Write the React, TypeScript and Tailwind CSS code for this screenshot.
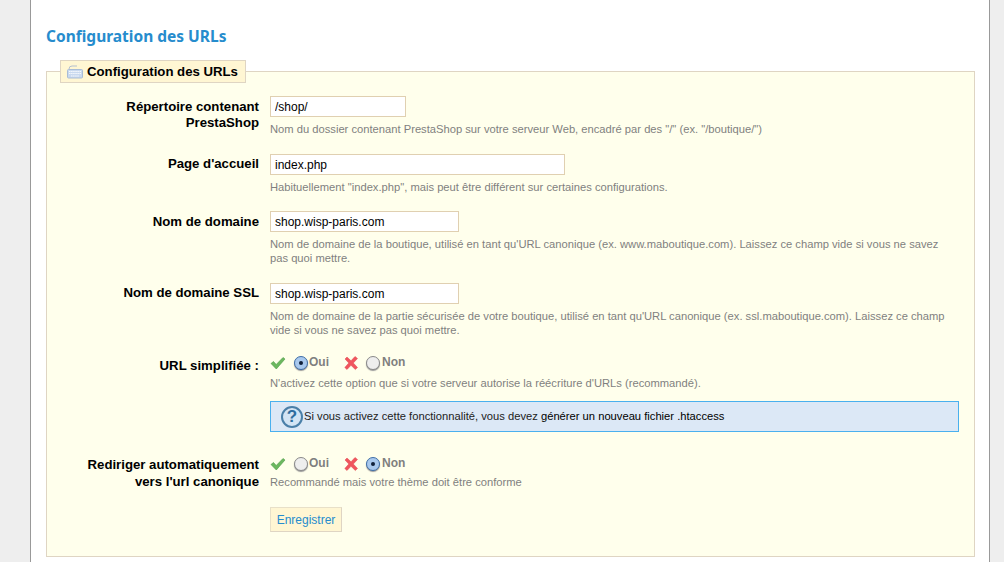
function Check() {
  return (
    <svg width="16" height="16" viewBox="0 0 16 16" className="shrink-0">
      <path d="M1 8.5 L3.5 6.5 L6.2 9.5 L13 2.5 L15 4 L6.3 14 Z" fill="#6cb85f" stroke="#4d9a48" strokeWidth="0.6" />
    </svg>
  )
}

function Cross() {
  return (
    <svg width="16" height="16" viewBox="0 0 16 16" className="shrink-0">
      <path d="M2 4 L4 2 L8 5.8 L12 1.5 L14.5 3.5 L10.3 8 L14.5 12.5 L12.3 14.5 L8 10.3 L4 14.5 L1.8 12.5 L5.8 8 Z" fill="#f0555e" stroke="#e0444c" strokeWidth="0.5" />
    </svg>
  )
}

function Radio({ on }: { on?: boolean }) {
  if (on) {
    return (
      <span className="flex h-[14px] w-[14px] shrink-0 items-center justify-center rounded-full border border-[#3f6fa8] bg-[#a9c9ee] shadow-[0_1px_1px_#999]">
        <span className="h-[4px] w-[4px] rounded-full bg-[#10203a]" />
      </span>
    )
  }
  return <span className="block h-[14px] w-[14px] shrink-0 rounded-full border border-[#8a8a8a] bg-[#eeeeee] shadow-[0_1px_1px_#999]" />
}

function KeyboardIcon() {
  return (
    <svg width="16" height="14" viewBox="0 0 16 14" className="shrink-0">
      <path d="M2 4 Q2 1 5 1 L10 1" fill="none" stroke="#b4bfcf" strokeWidth="1" />
      <rect x="0.5" y="4.5" width="15" height="8.5" rx="1" fill="#c9d9ef" stroke="#a9bcd6" />
      <path d="M2 6.5 H14 M2 8.5 H14 M4 11 H12" stroke="#f5f8fc" strokeWidth="1" strokeDasharray="1.5 0.6" />
    </svg>
  )
}

function Label({ children, className }: { children: React.ReactNode; className?: string }) {
  return <div className={`w-[212px] shrink-0 text-right text-[13.2px] font-bold text-black ${className ?? 'leading-[16px]'}`}>{children}</div>
}

function Hint({ children, className }: { children: React.ReactNode; className?: string }) {
  return <p className={`text-[11.2px] leading-[14px] whitespace-nowrap text-[#7f7f7f] ${className ?? ''}`}>{children}</p>
}

function Field({ label, value, width, hint, className, labelClass }: { label: React.ReactNode; value: string; width: string; hint: React.ReactNode; className: string; labelClass?: string }) {
  return (
    <div className={`flex gap-[11px] ${className}`}>
      <Label className={labelClass}>{label}</Label>
      <div>
        <input readOnly value={value} className={`block h-[21px] border border-[#e0d0b1] bg-white px-[4px] text-[12px] text-black outline-none ${width}`} />
        <Hint className="mt-[5px]">{hint}</Hint>
      </div>
    </div>
  )
}

function Toggle({ on }: { on: boolean }) {
  return (
    <div className="flex h-[16px] items-center text-[12px] font-bold text-[#7f7f7f]">
      <Check />
      <span className="ml-[8px]"><Radio on={on} /></span>
      <span className="ml-[1px] -translate-y-[1px]">Oui</span>
      <span className="ml-[14px]"><Cross /></span>
      <span className="ml-[7px]"><Radio on={!on} /></span>
      <span className="ml-[2px] -translate-y-[1px]">Non</span>
    </div>
  )
}

export default function App() {
  return (
    <div className="h-[562px] overflow-hidden bg-[#eeeeee] pl-[30px] pr-[14px] font-['Liberation_Sans',Arial,sans-serif]">
      <div className="h-full border-x border-[#999999] bg-white pl-[15px] pr-[14px]">
        <h1 className="pt-[26px] font-['Noto_Sans',sans-serif] text-[15.5px] leading-[20px] font-bold text-[#268ccd]">Configuration des URLs</h1>
        <fieldset className="mt-[14px] h-[497px] border border-[#dfd5c3] bg-[#ffffec] pr-[15px] pl-0">
          <legend className="ml-[13px] flex h-[23px] w-[186px] items-center gap-[4px] border border-[#dfd5c3] bg-[#fff6d3] pl-[6px] font-['Liberation_Sans',sans-serif] text-[13.2px] font-bold text-black">
            <KeyboardIcon />
            Configuration des URLs
          </legend>
          <Field
            className="mt-[13px]"
            labelClass="pt-[3px] leading-[16px]"
            label={<>Répertoire contenant<br />PrestaShop</>}
            value="/shop/"
            width="w-[136px]"
            hint={'Nom du dossier contenant PrestaShop sur votre serveur Web, encadré par des "/" (ex. "/boutique/")'}
          />
          <Field
            className="mt-[18px]"
            labelClass="pt-[2px] leading-[16px]"
            label="Page d'accueil"
            value="index.php"
            width="w-[295px]"
            hint={'Habituellement "index.php", mais peut être différent sur certaines configurations.'}
          />
          <Field
            className="mt-[17px]"
            labelClass="pt-[3px] leading-[16px]"
            label="Nom de domaine"
            value="shop.wisp-paris.com"
            width="w-[189px]"
            hint={<>Nom de domaine de la boutique, utilisé en tant qu'URL canonique (ex. www.maboutique.com). Laissez ce champ vide si vous ne savez<br />pas quoi mettre.</>}
          />
          <Field
            className="mt-[18px]"
            labelClass="pt-[2px] leading-[16px]"
            label="Nom de domaine SSL"
            value="shop.wisp-paris.com"
            width="w-[189px]"
            hint={<>Nom de domaine de la partie sécurisée de votre boutique, utilisé en tant qu'URL canonique (ex. ssl.maboutique.com). Laissez ce champ<br />vide si vous ne savez pas quoi mettre.</>}
          />
          <div className="mt-[18px] flex gap-[11px]">
            <Label className="pt-[3px] leading-[16px]">URL simplifiée :</Label>
            <div className="flex-1">
              <Toggle on />
              <Hint className="mt-[5px]">N'activez cette option que si votre serveur autorise la réécriture d'URLs (recommandé).</Hint>
              <div className="mt-[11px] flex h-[31px] items-center border border-[#4ab0ee] bg-[#dce8f6] pl-[10px] text-[11.2px] text-[#222222]">
                <span className="flex h-[22px] w-[22px] shrink-0 items-center justify-center rounded-full border-2 border-[#4a7fa8] bg-[#d3e4f4] text-[17px] leading-none font-bold text-[#2f6d9e]">?</span>
                <span className="ml-[1px]">Si vous activez cette fonctionnalité, vous devez <span className="text-black">générer un nouveau fichier .htaccess</span></span>
              </div>
            </div>
          </div>
          <div className="mt-[24px] flex gap-[11px]">
            <Label className="leading-[17px]">Rediriger automatiquement<br />vers l'url canonique</Label>
            <div>
              <Toggle on={false} />
              <Hint className="mt-[3px]">Recommandé mais votre thème doit être conforme</Hint>
              <button className="mt-[18px] block h-[25px] w-[72px] border border-[#e8e0c8] border-r-[#dfd5c3] border-b-[#dfd5c3] bg-[#fff6d3] text-[12px] text-[#268ccd]">Enregistrer</button>
            </div>
          </div>
        </fieldset>
      </div>
    </div>
  )
}
